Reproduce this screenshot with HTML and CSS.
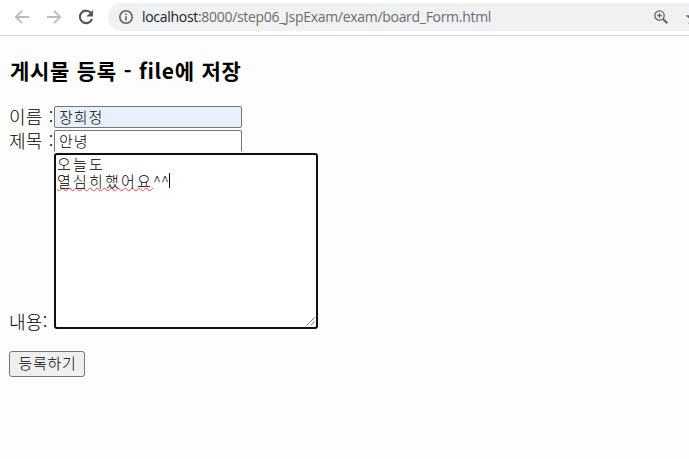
FILE: index.html
```html
<!DOCTYPE html>
<html lang="ko">
<head>
<meta charset="utf-8">
<title>board_Form</title>
<link rel="stylesheet" href="styles.css">
</head>
<body>
<header class="toolbar">
  <svg class="nav" viewBox="0 0 16 16"><path d="M15 8H2M8 1.8L1.8 8L8 14.2"/></svg>
  <svg class="nav" viewBox="0 0 16 16"><path d="M1 8h13M8 1.8L14.2 8L8 14.2"/></svg>
  <svg class="nav reload" viewBox="0 0 16 16"><path d="M13.1 4.2A6.2 6.2 0 1 0 14 9.8"/><path class="solid" d="M15 1v6.6H8.4z"/></svg>
  <div class="address">
    <svg class="info" viewBox="0 0 14 14"><circle cx="7" cy="7" r="6.2"/><path d="M7 6.2v4.3M7 3.4v1.6"/></svg>
    <span class="url"><b>localhost</b>:8000/step06_JspExam/exam/board_Form.html</span>
    <svg class="magnify" viewBox="0 0 14 14"><circle cx="5.5" cy="5.5" r="4.7"/><path d="M5.5 3.2v4.6M3.2 5.5h4.6"/><path class="handle" d="M9 9l4.3 4.3"/></svg>
    <svg class="star" viewBox="0 0 16 16"><path d="M8 1l2 5 5.5.4-4.2 3.5 1.3 5.3L8 12.3l-4.6 2.9 1.3-5.3L.5 6.4 6 6z"/></svg>
  </div>
</header>
<main class="page">
  <h1 class="title">게시물 등록 - file에 저장</h1>
  <form>
    <div class="row"><label class="label" for="name">이름 :</label><input id="name" class="field filled" value="장희정"></div>
    <div class="row"><label class="label" for="subject">제목 :</label><input id="subject" class="field clipped" value="안녕"></div>
    <div class="row content-row">
      <span class="label">내용:</span>
      <div class="editor" contenteditable="true" spellcheck="false"><div class="line">오늘도</div><div class="line"><span class="misspelled">열심히했어요</span><span class="carets">^^</span><i class="caret"></i></div><svg class="grip" viewBox="0 0 9 9"><path d="M.5 8.5l8-8M4.5 8.5l4-4"/></svg></div>
    </div>
    <button class="submit" type="button">등록하기</button>
  </form>
</main>
</body>
</html>
```
FILE: styles.css
```css
* { box-sizing: border-box; }
body {
  margin: 0;
  height: 459px;
  overflow: hidden;
  background: #fdfdfd;
  color: #000;
  font-family: "Noto Sans CJK KR", sans-serif;
}
.toolbar {
  display: flex;
  align-items: center;
  height: 36px;
  padding: 0 0 2px 14px;
  border-bottom: 1px solid #d9dadc;
  background: #fff;
}
svg { display: block; flex: none; fill: none; }
.nav { width: 16px; height: 16px; margin-right: 16px; stroke: #babcbe; stroke-width: 1.9; }
.reload { margin-right: 14px; stroke: #54575b; stroke-width: 2.1; }
.solid { fill: #54575b; stroke: none; }
.address {
  display: flex;
  align-items: center;
  flex: 1;
  height: 28px;
  padding-left: 11px;
  border-radius: 14px 0 0 14px;
  background: #f0f1f3;
  overflow: hidden;
}
.info { width: 14px; height: 14px; margin-right: 9px; stroke: #5f6368; stroke-width: 1.6; }
.url {
  width: 512px;
  flex: none;
  color: #6a6d71;
  font: 14px/20px "Open Sans", sans-serif;
  letter-spacing: -.3px;
  white-space: nowrap;
}
.url b { color: #202124; font-weight: 400; }
.magnify { width: 14px; height: 14px; stroke: #5f6368; stroke-width: 1.3; }
.handle { stroke-width: 2; }
.star { width: 16px; height: 16px; margin-left: 17px; fill: #5f6368; }
.page { padding: 19px 9px 0; }
.title { margin: 0 0 18px; height: 33px; padding-left: 1px; font-size: 21px; line-height: 31px; font-weight: 700; letter-spacing: .7px; word-spacing: .2px; white-space: nowrap; }
.row { display: flex; height: 24px; }
.label { width: 45px; flex: none; font-size: 18px; line-height: 20px; font-weight: 300; letter-spacing: .3px; word-spacing: .8px; white-space: nowrap; }
.field {
  width: 188px;
  height: 22px;
  padding: 0 3px 2px 4px;
  border: 1px solid #767676;
  border-radius: 2px;
  background: #fff;
  color: #000;
  font: 300 15px/18px "Noto Sans CJK KR", sans-serif;
  letter-spacing: .9px;
  outline: 0;
}
.filled { background: #e8f0fe; }
.clipped { border-bottom-color: transparent; border-radius: 2px 2px 0 0; }
.content-row { height: 176px; align-items: flex-end; margin-top: -1px; }
.content-row .label { line-height: 16px; height: 16px; }
.editor {
  position: relative;
  width: 264px;
  height: 176px;
  padding: 0 1px;
  border: 2px solid #101010;
  border-radius: 3px;
  background: #fff;
  font: 300 15px/17px "Noto Sans CJK KR", sans-serif;
  letter-spacing: 2.2px;
  outline: 0;
}
.line { display: flex; height: 17px; white-space: nowrap; }
.misspelled { text-decoration: underline wavy #e8444c 1px; text-underline-offset: 0; text-decoration-skip-ink: none; }
.carets { letter-spacing: 0; }
.caret { width: 1px; height: 15px; margin: 1px 0 0; background: #000; }
.grip { position: absolute; right: 1px; bottom: 1px; width: 9px; height: 9px; stroke: #666; stroke-width: .8; }
.submit {
  display: block;
  width: 76px;
  height: 26px;
  margin-top: 22px;
  padding: 0 0 3px 1px;
  border: 1px solid #767676;
  border-radius: 3px;
  background: #efefef;
  color: #000;
  font: 300 15px/22px "Noto Sans CJK KR", sans-serif;
  letter-spacing: .7px;
}
```
